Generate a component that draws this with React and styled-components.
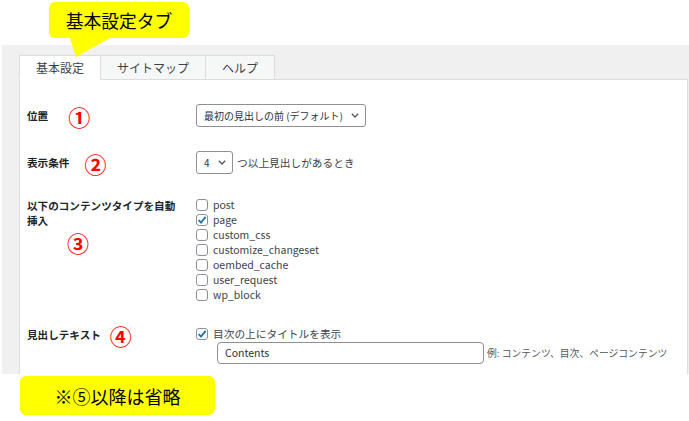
import React from "react";
import styled, { createGlobalStyle } from "styled-components";

const GlobalStyle = createGlobalStyle`
  body {
    margin: 0;
    background: #fff;
    font-family: "Noto Sans CJK JP", "Noto Sans", sans-serif;
  }
`;

const postTypes = [
  { name: "post", checked: false },
  { name: "page", checked: true },
  { name: "custom_css", checked: false },
  { name: "customize_changeset", checked: false },
  { name: "oembed_cache", checked: false },
  { name: "user_request", checked: false },
  { name: "wp_block", checked: false },
];

const Chevron = () => (
  <svg width="8" height="5" viewBox="0 0 8 5">
    <path d="M0.8 0.8 L4 4 L7.2 0.8" fill="none" stroke="#50575e" strokeWidth="1.3" />
  </svg>
);

const CheckBox = ({ checked }) => (
  <Box>
    {checked && (
      <svg width="10" height="10" viewBox="0 0 10 10">
        <path d="M1.6 5.2 L4 7.6 L8.6 1.8" fill="none" stroke="#2271b1" strokeWidth="1.9" />
      </svg>
    )}
  </Box>
);

const App = () => {
  return (
    <>
      <GlobalStyle />
      <Header>
        <Callout>基本設定タブ</Callout>
      </Header>
      <Settings>
        <Tabs>
          <Tab active>基本設定</Tab>
          <Tab>サイトマップ</Tab>
          <Tab>ヘルプ</Tab>
        </Tabs>
        <Panel>
          <Row lh="23px">
            <Label>
              位置<Num offset="20px">①</Num>
            </Label>
            <div>
              <Select w="170px">
                <span>最初の見出しの前 (デフォルト)</span>
                <Chevron />
              </Select>
            </div>
          </Row>
          <Row lh="23px">
            <Label>
              表示条件<Num offset="15px">②</Num>
            </Label>
            <Inline>
              <Select w="37px">
                <span>4</span>
                <Chevron />
              </Select>
              <FieldText>つ以上見出しがあるとき</FieldText>
            </Inline>
          </Row>
          <Row lh="15px">
            <div>
              <LabelBlock>
                以下のコンテンツタイプを自動
                <br />
                挿入
              </LabelBlock>
              <NumBlock>③</NumBlock>
            </div>
            <List>
              {postTypes.map((t) => (
                <CheckItem key={t.name}>
                  <CheckBox checked={t.checked} />
                  <span>{t.name}</span>
                </CheckItem>
              ))}
            </List>
          </Row>
          <Row lh="18px">
            <Label>
              見出しテキスト<Num offset="9px">④</Num>
            </Label>
            <div>
              <CheckItem>
                <CheckBox checked />
                <FieldText>目次の上にタイトルを表示</FieldText>
              </CheckItem>
              <InputLine>
                <TextInput>Contents</TextInput>
                <Hint>例: コンテンツ、目次、ページコンテンツ</Hint>
              </InputLine>
            </div>
          </Row>
        </Panel>
      </Settings>
      <Note>※⑤以降は省略</Note>
    </>
  );
};

const Header = styled.div`
  height: 45px;
  box-sizing: border-box;
  padding: 2px 0 0 49px;
`;

const Callout = styled.div`
  position: relative;
  z-index: 3;
  width: 140px;
  height: 36px;
  background: #ffff00;
  border-radius: 6px;
  display: flex;
  align-items: center;
  justify-content: center;
  font-size: 17.8px;
  font-weight: 400;
  color: #000;

  &::after {
    content: "";
    position: absolute;
    left: 21px;
    top: 100%;
    width: 40px;
    height: 19px;
    background: #ffff00;
    clip-path: polygon(0 0, 100% 0, 15% 100%);
  }
`;

const Settings = styled.div`
  margin-left: 2px;
  height: 329px;
  box-sizing: border-box;
  padding: 10px 1px 0 17px;
  background: #f0f0f0;
  display: flex;
  flex-direction: column;
`;

const Tabs = styled.div`
  display: flex;
  height: 25px;
`;

const Tab = styled.div`
  position: relative;
  z-index: 1;
  padding: 0 16px;
  margin-right: -1px;
  display: flex;
  align-items: center;
  font-size: 12px;
  color: #3c434a;
  background: ${(p) => (p.active ? "#fff" : "#f6f7f7")};
  border: 1px solid #dcdcde;
  border-bottom: ${(p) => (p.active ? "1px solid #fff" : "none")};
  height: ${(p) => (p.active ? "25px" : "24px")};
  box-sizing: border-box;
`;

const Panel = styled.div`
  flex: 1;
  margin-top: -1px;
  background: #fff;
  border: 1px solid #dcdcde;
  border-bottom: none;
  padding: 0 7px;
`;

const Row = styled.div`
  display: grid;
  grid-template-columns: 169px 1fr;
  align-items: start;
  padding-top: 24px;
  line-height: ${(p) => p.lh};
`;

const Label = styled.div`
  display: flex;
  align-items: center;
  font-size: 10.6px;
  font-weight: 700;
  color: #1d2327;
`;

const LabelBlock = styled.div`
  font-size: 10.6px;
  font-weight: 700;
  color: #1d2327;
`;

const Num = styled.span`
  margin: -5px 0 -5px ${(p) => p.offset};
  font-size: 22px;
  font-weight: 700;
  color: #ff0000;
  line-height: 22px;
`;

const NumBlock = styled.div`
  margin: 3px 0 0 40px;
  font-size: 22px;
  font-weight: 700;
  color: #ff0000;
  line-height: 22px;
`;

const Inline = styled.div`
  display: flex;
  align-items: center;
  gap: 4px;
`;

const Select = styled.div`
  width: ${(p) => p.w};
  height: 23px;
  box-sizing: border-box;
  border: 1px solid #8c8f94;
  border-radius: 3px;
  padding: 0 6px 0 7px;
  display: flex;
  align-items: center;
  justify-content: space-between;
  font-size: 10px;
  color: #2c3338;
`;

const FieldText = styled.span`
  font-size: 10.7px;
  color: #3c434a;
`;

const List = styled.div`
  display: flex;
  flex-direction: column;
  margin-top: -1px;
`;

const CheckItem = styled.div`
  display: flex;
  align-items: center;
  gap: 5px;
  height: 15px;
  font-size: 10.5px;
  color: #3c434a;
`;

const Box = styled.span`
  width: 12px;
  height: 12px;
  box-sizing: border-box;
  border: 1px solid #8c8f94;
  border-radius: 3px;
  background: #fff;
  display: flex;
  align-items: center;
  justify-content: center;
`;

const InputLine = styled.div`
  display: flex;
  align-items: center;
  margin: 1px 0 0 21px;
  gap: 3px;
`;

const TextInput = styled.div`
  width: 267px;
  height: 22px;
  box-sizing: border-box;
  border: 1px solid #8c8f94;
  border-radius: 4px;
  padding-left: 7px;
  display: flex;
  align-items: center;
  font-size: 10.5px;
  color: #2c3338;
`;

const Hint = styled.span`
  font-size: 9.8px;
  color: #50575e;
`;

const Note = styled.div`
  margin: 2px 0 0 20px;
  width: 195px;
  height: 39px;
  background: #ffff00;
  border-radius: 6px;
  display: flex;
  align-items: center;
  justify-content: center;
  font-size: 18px;
  font-weight: 400;
  color: #000;
`;

export default App;
